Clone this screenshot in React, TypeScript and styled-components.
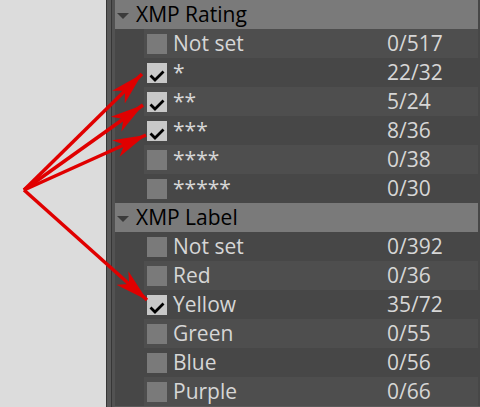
import React from "react";
import styled, { createGlobalStyle } from "styled-components";

const GlobalStyle = createGlobalStyle`
  html, body {
    margin: 0;
    padding: 0;
    background: #dcdcdc;
    overflow: hidden;
  }
  body {
    font-family: "Open Sans", "Noto Sans", sans-serif;
  }
`;

const Page = styled.div`
  position: relative;
  display: flex;
  width: 480px;
  height: 407px;
  background: #dcdcdc;
`;

const Gutter = styled.div`
  flex: 0 0 106px;
`;

const Splitter = styled.div`
  flex: 0 0 4px;
  background: #595959;
  border-left: 1px solid #363636;
  border-right: 1px solid #363636;
`;

const Panel = styled.div`
  flex: 1;
  display: flex;
  flex-direction: column;
  background: #474747;
  border-left: 3px solid #525252;
  padding-right: 2px;
  border-bottom: 1px solid #5a5a5a;
  overflow: hidden;
`;

const SectionHeader = styled.div`
  flex: 0 0 29px;
  display: flex;
  align-items: center;
  gap: 7px;
  padding-left: 2px;
  background: #7a7a7a;
  color: #000;
  font-size: 21px;
  line-height: 29px;
`;

const Caret = styled.span`
  width: 0;
  height: 0;
  border-left: 6px solid transparent;
  border-right: 6px solid transparent;
  border-top: 6px solid #3b3b3b;
  margin-top: 2px;
`;

const Row = styled.div<{ $alt: boolean }>`
  flex: 0 0 29px;
  margin-left: 29px;
  padding-left: 3px;
  display: grid;
  grid-template-columns: 20px 208px 1fr;
  column-gap: 6px;
  align-items: center;
  background: ${(p) => (p.$alt ? "#4e4e4e" : "#474747")};
  color: #d6d6d6;
  font-size: 21px;
  line-height: 29px;
`;

const Box = styled.span<{ $checked: boolean }>`
  width: 20px;
  height: 20px;
  background: ${(p) => (p.$checked ? "#c8c8c8" : "#7a7a7a")};
  display: block;
`;

const Label = styled.span`
  white-space: nowrap;
`;

const Count = styled.span`
  white-space: nowrap;
`;

const Overlay = styled.svg`
  position: absolute;
  left: 0;
  top: 0;
  pointer-events: none;
`;

type Item = { label: string; count: string; checked?: boolean };

const sections: { title: string; items: Item[] }[] = [
  {
    title: "XMP Rating",
    items: [
      { label: "Not set", count: "0/517" },
      { label: "*", count: "22/32", checked: true },
      { label: "**", count: "5/24", checked: true },
      { label: "***", count: "8/36", checked: true },
      { label: "****", count: "0/38" },
      { label: "*****", count: "0/30" },
    ],
  },
  {
    title: "XMP Label",
    items: [
      { label: "Not set", count: "0/392" },
      { label: "Red", count: "0/36" },
      { label: "Yellow", count: "35/72", checked: true },
      { label: "Green", count: "0/55" },
      { label: "Blue", count: "0/56" },
      { label: "Purple", count: "0/66" },
    ],
  },
];

function Check({ checked }: { checked?: boolean }) {
  return (
    <Box $checked={!!checked}>
      {checked && (
        <svg width="20" height="20" viewBox="0 0 20 20">
          <polyline
            points="3.5,10.5 8,15 16.5,6.5"
            fill="none"
            stroke="#000"
            strokeWidth="2.8"
          />
        </svg>
      )}
    </Box>
  );
}

const origin = { x: 24, y: 190 };
const tips = [
  { x: 142, y: 74 },
  { x: 143, y: 105 },
  { x: 146, y: 135 },
  { x: 147, y: 300 },
];

function Arrows() {
  return (
    <Overlay width="480" height="407" viewBox="0 0 480 407">
      <defs>
        <marker
          id="head"
          markerUnits="userSpaceOnUse"
          markerWidth="36"
          markerHeight="22"
          refX="33"
          refY="11"
          orient="auto"
        >
          <path d="M0,2 L33,11 L0,20 L9,11 Z" fill="#e00000" />
        </marker>
      </defs>
      {tips.map((t, i) => (
        <line
          key={i}
          x1={origin.x}
          y1={origin.y}
          x2={t.x}
          y2={t.y}
          stroke="#e00000"
          strokeWidth="3.5"
          markerEnd="url(#head)"
        />
      ))}
    </Overlay>
  );
}

export default function App() {
  let idx = 0;
  return (
    <>
      <GlobalStyle />
      <Page>
        <Gutter />
        <Splitter />
        <Panel>
          {sections.map((s) => {
            idx++;
            return (
              <React.Fragment key={s.title}>
                <SectionHeader>
                  <Caret />
                  {s.title}
                </SectionHeader>
                {s.items.map((it) => {
                  const alt = idx % 2 === 1;
                  idx++;
                  return (
                    <Row key={s.title + it.label} $alt={alt}>
                      <Check checked={it.checked} />
                      <Label>{it.label}</Label>
                      <Count>{it.count}</Count>
                    </Row>
                  );
                })}
              </React.Fragment>
            );
          })}
        </Panel>
        <Arrows />
      </Page>
    </>
  );
}
